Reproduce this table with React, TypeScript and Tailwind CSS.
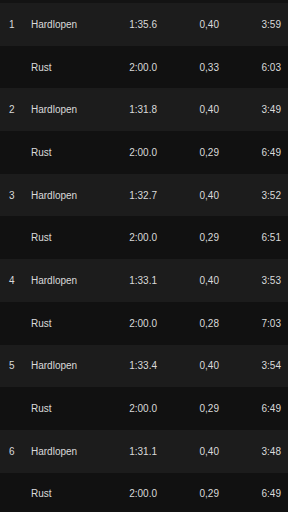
const laps = [
  { n: "1", time: "1:35.6", dist: "0,40", pace: "3:59", restDist: "0,33", restPace: "6:03" },
  { n: "2", time: "1:31.8", dist: "0,40", pace: "3:49", restDist: "0,29", restPace: "6:49" },
  { n: "3", time: "1:32.7", dist: "0,40", pace: "3:52", restDist: "0,29", restPace: "6:51" },
  { n: "4", time: "1:33.1", dist: "0,40", pace: "3:53", restDist: "0,28", restPace: "7:03" },
  { n: "5", time: "1:33.4", dist: "0,40", pace: "3:54", restDist: "0,29", restPace: "6:49" },
  { n: "6", time: "1:31.1", dist: "0,40", pace: "3:48", restDist: "0,29", restPace: "6:49" },
];

type RowProps = {
  n: string;
  name: string;
  time: string;
  dist: string;
  pace: string;
  light: boolean;
};

const Row = ({ n, name, time, dist, pace, light }: RowProps) => (
  <div
    className={`flex h-[42.7px] shrink-0 items-center pl-[9px] pr-[7px] ${
      light ? "bg-[#1c1c1c]" : "bg-[#111111]"
    }`}
  >
    <span className="w-[22px]">{n}</span>
    <span className="w-[80px]">{name}</span>
    <span className="w-[46px] text-right">{time}</span>
    <span className="w-[62px] text-right">{dist}</span>
    <span className="flex-1 text-right">{pace}</span>
  </div>
);

export default function App() {
  return (
    <div
      className="flex h-[512px] w-[288px] flex-col overflow-hidden bg-[#111111] text-[10px] text-[#dadada]"
      style={{ fontFamily: '"Liberation Sans", Arial, sans-serif' }}
    >
      <div className="h-[3px] shrink-0 bg-[#131313]" />
      {laps.map((lap) => (
        <div key={lap.n} className="flex flex-col">
          <Row n={lap.n} name="Hardlopen" time={lap.time} dist={lap.dist} pace={lap.pace} light />
          <Row n="" name="Rust" time="2:00.0" dist={lap.restDist} pace={lap.restPace} light={false} />
        </div>
      ))}
    </div>
  );
}
